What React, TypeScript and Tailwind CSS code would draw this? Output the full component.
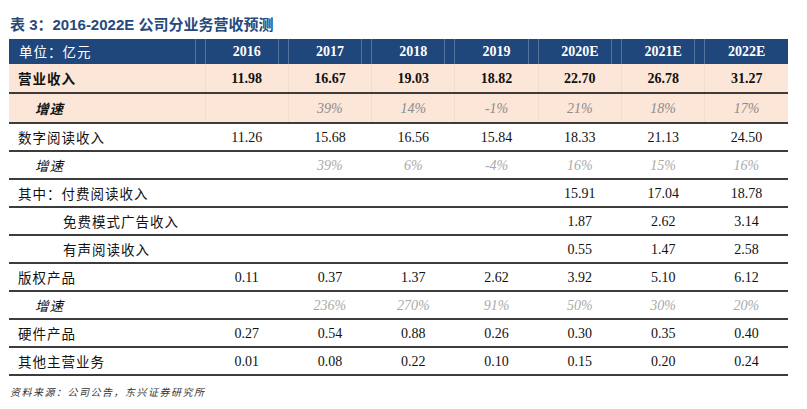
const cjk = '"Noto Sans CJK SC", sans-serif';
const serif = '"Liberation Serif", "Times New Roman", serif';

type Row = {
  label: string;
  indent?: "growth" | "sub";
  values: string[];
  kind: "total" | "totalGrowth" | "plain" | "growth";
};

const YEARS = ["2016", "2017", "2018", "2019", "2020E", "2021E", "2022E"];

const ROWS: Row[] = [
  { label: "营业收入", kind: "total", values: ["11.98", "16.67", "19.03", "18.82", "22.70", "26.78", "31.27"] },
  { label: "增速", indent: "growth", kind: "totalGrowth", values: ["", "39%", "14%", "-1%", "21%", "18%", "17%"] },
  { label: "数字阅读收入", kind: "plain", values: ["11.26", "15.68", "16.56", "15.84", "18.33", "21.13", "24.50"] },
  { label: "增速", indent: "growth", kind: "growth", values: ["", "39%", "6%", "-4%", "16%", "15%", "16%"] },
  { label: "其中：付费阅读收入", kind: "plain", values: ["", "", "", "", "15.91", "17.04", "18.78"] },
  { label: "免费模式广告收入", indent: "sub", kind: "plain", values: ["", "", "", "", "1.87", "2.62", "3.14"] },
  { label: "有声阅读收入", indent: "sub", kind: "plain", values: ["", "", "", "", "0.55", "1.47", "2.58"] },
  { label: "版权产品", kind: "plain", values: ["0.11", "0.37", "1.37", "2.62", "3.92", "5.10", "6.12"] },
  { label: "增速", indent: "growth", kind: "growth", values: ["", "236%", "270%", "91%", "50%", "30%", "20%"] },
  { label: "硬件产品", kind: "plain", values: ["0.27", "0.54", "0.88", "0.26", "0.30", "0.35", "0.40"] },
  { label: "其他主营业务", kind: "plain", values: ["0.01", "0.08", "0.22", "0.10", "0.15", "0.20", "0.24"] },
];

function rowHeight(i: number) {
  if (i === 0) return "h-[29px]";
  if (i === 1) return "h-[30px]";
  return "h-[28px]";
}

export default function App() {
  return (
    <div className="w-[807px] h-[409px] bg-white pl-[9px] pt-[15px]">
      <h1
        className="text-[15px] font-bold leading-[20px] text-[#254a7b] pl-px"
        style={{ fontFamily: '"Liberation Sans", "Noto Sans CJK SC", sans-serif' }}
      >
        表 3：2016-2022E 公司分业务营收预测
      </h1>
      <table className="mt-[4px] w-[779px] border-collapse table-fixed">
        <colgroup>
          <col className="w-[196px]" />
          {YEARS.map((y) => (
            <col key={y} className="w-[83.3px]" />
          ))}
        </colgroup>
        <thead>
          <tr className="h-[25px] bg-[#1f477b] text-white">
            <th
              className="text-left font-normal pl-[10px] text-[13.5px] tracking-[1px] shadow-[inset_-9px_0_0_#1f477b,inset_-10px_0_0_#56759f]"
              style={{ fontFamily: cjk }}
            >
              单位：亿元
            </th>
            {YEARS.map((y, i) => (
              <th
                key={y}
                className={`font-bold text-[14px] border-l border-[#56759f] ${
                  i < YEARS.length - 1 ? "shadow-[inset_-9px_0_0_#1f477b,inset_-10px_0_0_#56759f]" : ""
                }`}
                style={{ fontFamily: serif }}
              >
                {y}
              </th>
            ))}
          </tr>
        </thead>
        <tbody>
          {ROWS.map((r, i) => {
            const peach = r.kind === "total" || r.kind === "totalGrowth";
            const growth = r.kind === "growth" || r.kind === "totalGrowth";
            return (
              <tr
                key={i}
                className={`${rowHeight(i)} border-b-2 border-[#3c3c3c] ${peach ? "bg-[#fce6d8]" : "bg-white"}`}
              >
                <td
                  className={`text-[13.5px] tracking-[1px] text-[#111] ${
                    r.indent === "sub" ? "pl-[54px]" : r.indent === "growth" ? "pl-[26px] italic" : "pl-[9px]"
                  } ${peach ? "font-bold" : "font-normal"}`}
                  style={{ fontFamily: cjk }}
                >
                  {r.label}
                </td>
                {r.values.map((v, j) => (
                  <td
                    key={j}
                    className={`text-center text-[14px] ${peach ? "border-l border-[#f3dccd]" : ""} ${
                      growth
                        ? peach
                          ? "italic text-[#8c8c8c]"
                          : "italic text-[#aaaaaa]"
                        : peach
                        ? "font-bold text-[#111]"
                        : "text-[#111]"
                    }`}
                    style={{ fontFamily: serif }}
                  >
                    {v}
                  </td>
                ))}
              </tr>
            );
          })}
        </tbody>
      </table>
      <p
        className="mt-[8px] text-[10px] italic tracking-[1.5px] text-[#333] pl-[1px]"
        style={{ fontFamily: cjk }}
      >
        资料来源：公司公告，东兴证券研究所
      </p>
    </div>
  );
}
